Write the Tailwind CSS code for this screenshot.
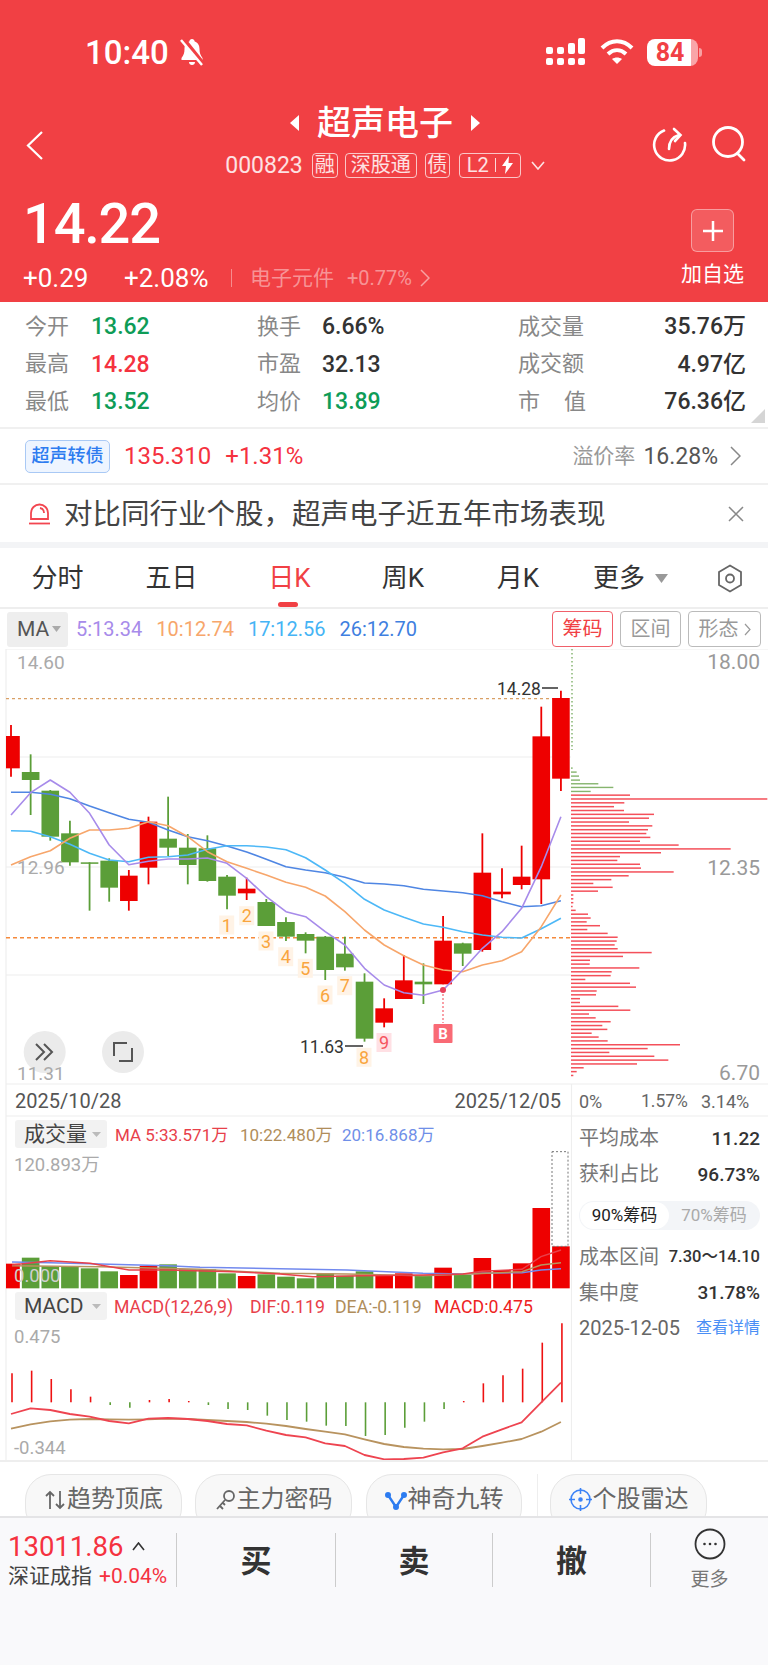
<!DOCTYPE html>
<html lang="zh-CN">
<head>
  <meta charset="UTF-8" />
  <title>超声电子</title>
  <script src="https://cdn.jsdelivr.net/npm/@tailwindcss/browser@4"></script>
</head>
<body class="w-[768px] h-[1665px] overflow-hidden bg-white font-['Roboto','Noto_Sans_CJK_SC',sans-serif]">

  <!-- red header -->
  <header class="h-[302px] bg-[#f14044] text-white">
    <div class="h-[104px] flex items-center">
      <span class="ml-[85px] text-[33px] font-medium leading-none">10:40</span>
      <svg class="ml-[10px]" width="26" height="28" viewBox="0 0 26 28" fill="none">
        <path d="M13 1c-1.500 0-2.500 1-2.700 2.400C6.800 4.500 5.500 7.500 5.500 11c0 4-1 6.500-3 9v2h21v-2c-2-2.500-3-5-3-9 0-3.500-1.300-6.500-4.800-7.600C15.500 2 14.500 1 13 1z" fill="#fff"/>
        <path d="M10 24h6c0 1.800-1.300 3-3 3s-3-1.200-3-3z" fill="#fff"/>
        <path d="M4 1l20 25" stroke="#f14044" stroke-width="5"/>
        <path d="M2 2l21 25" stroke="#fff" stroke-width="2.500"/>
      </svg>
      <svg class="ml-[341px]" width="40" height="28" viewBox="0 0 40 28" fill="#fff">
        <rect x="0" y="20" width="7" height="7" rx="2"/><rect x="0" y="9" width="7" height="7" rx="2"/>
        <rect x="11" y="20" width="7" height="7" rx="2"/><rect x="11" y="9" width="7" height="7" rx="2"/>
        <rect x="22" y="20" width="7" height="7" rx="2"/><rect x="22" y="5" width="7" height="11" rx="2"/>
        <rect x="32" y="20" width="7" height="7" rx="2"/><rect x="32" y="0" width="7" height="16" rx="2"/>
      </svg>
      <svg class="ml-[14px]" width="34" height="26" viewBox="0 0 34 26" fill="none" stroke="#fff" stroke-width="4">
        <path d="M2 9c9-9 21-9 30 0"/>
        <path d="M8 15c5.500-5 12.500-5 18 0"/>
        <path d="M17 25l-5-5c3-2 7-2 10 0z" fill="#fff" stroke="none"/>
      </svg>
      <div class="ml-[13px] w-[51px] h-[27px] rounded-[8px] bg-[linear-gradient(90deg,#fff_86%,#f9a5a8_86%)] flex items-center pl-[9px] text-[#f14044] text-[25px] font-bold leading-none">84</div>
      <div class="ml-[1px] w-[3px] h-[9px] rounded-r-full bg-white/50"></div>
    </div>

    <div class="h-[82px] flex items-center">
      <svg class="ml-[26px]" width="18" height="29" viewBox="0 0 18 29" fill="none" stroke="#fff" stroke-width="2.200"><path d="M16 1L2 14.500 16 28"/></svg>
      <div class="w-[608px] pl-[74px] pb-[8px] flex flex-col items-center">
        <div class="flex items-center h-[38px]">
          <svg width="11" height="18" viewBox="0 0 11 18" fill="#fff"><path d="M10 1v16L1 9z"/></svg>
          <span class="mx-[17px] text-[34px] font-medium leading-none">超声电子</span>
          <svg width="11" height="18" viewBox="0 0 11 18" fill="#fff"><path d="M1 1v16l9-8z"/></svg>
        </div>
        <div class="mt-[10px] flex items-center h-[26px] text-[20px] leading-none text-white/85">
          <span class="text-[23px] mr-[9px]">000823</span>
          <span class="w-[26px] h-[25px] border border-white/70 rounded-[4px] flex items-center justify-center">融</span>
          <span class="ml-[7px] w-[72px] h-[25px] border border-white/70 rounded-[4px] flex items-center justify-center">深股通</span>
          <span class="ml-[8px] w-[25px] h-[25px] border border-white/70 rounded-[4px] flex items-center justify-center">债</span>
          <span class="ml-[9px] w-[62px] h-[25px] border border-white/70 rounded-[4px] flex items-center justify-center gap-[6px]">
            L2<i class="w-[1px] h-[14px] bg-white/80"></i>
            <svg width="11" height="18" viewBox="0 0 11 18" fill="#fff"><path d="M7 0L0 10h4l-1 8 8-11H6.500z"/></svg>
          </span>
          <svg class="ml-[10px]" width="14" height="9" viewBox="0 0 14 9" fill="none" stroke="#fff" stroke-opacity=".85" stroke-width="1.600"><path d="M1 1l6 7 6-7"/></svg>
        </div>
      </div>
      <svg class="-mt-[2px]" width="36" height="38" viewBox="0 0 36 38" fill="none" stroke="#fff" stroke-width="2.600" stroke-linecap="round">
        <path d="M12 5.500A15.500 15.500 0 1 0 33 18"/>
        <path d="M17 24c0-8 3-12 10-14"/>
        <path d="M22 4l6.500 6-5.500 6"/>
      </svg>
      <svg class="ml-[23px] -mt-[2px]" width="36" height="38" viewBox="0 0 36 38" fill="none" stroke="#fff" stroke-width="2.800" stroke-linecap="round">
        <circle cx="17" cy="17" r="14.500"/><path d="M27 29l6 6"/>
      </svg>
    </div>

    <div class="flex justify-between">
      <div>
        <div class="h-[76px] flex items-center pl-[23px] text-[56px] font-medium leading-none tracking-[-1.200px]">14.22</div>
        <div class="h-[32px] flex items-center text-[26px] leading-none">
          <span class="ml-[23px] w-[101px]">+0.29</span>
          <span class="w-[107px]">+2.08%</span>
          <i class="w-[1px] h-[18px] bg-white/40"></i>
          <span class="ml-[18px] text-[21px] text-white/45">电子元件</span>
          <span class="ml-[13px] text-[20px] text-white/45">+0.77%</span>
          <svg class="ml-[8px]" width="10" height="18" viewBox="0 0 10 18" fill="none" stroke="#fff" stroke-opacity=".5" stroke-width="1.500"><path d="M1 1l8 8-8 8"/></svg>
        </div>
      </div>
      <div class="w-[87px] mr-[12px] flex flex-col items-center pt-[23px]">
        <div class="w-[43px] h-[43px] rounded-[6px] bg-white/15 border border-white/40 flex items-center justify-center">
          <svg width="24" height="24" viewBox="0 0 24 24" stroke="#fff" stroke-width="2.500"><path d="M12 2v20M2 12h20"/></svg>
        </div>
        <div class="mt-[10px] h-[24px] text-[21px] leading-[24px] whitespace-nowrap">加自选</div>
      </div>
    </div>
  </header>

  <!-- quote stats -->
  <section class="relative h-[127px] pt-[6px] border-b-2 border-[#f0f0f0] grid grid-cols-[257px_261px_250px] grid-rows-[repeat(3,37.500px)] text-[23px] leading-none font-medium">
    <div class="pl-[25px] flex items-center"><span class="w-[66px] text-[22px] font-normal text-[#888]">今开</span><span class="text-[#0e9c57]">13.62</span></div>
    <div class="flex items-center"><span class="w-[65px] text-[22px] font-normal text-[#888]">换手</span><span class="text-[#333]">6.66%</span></div>
    <div class="flex items-center pr-[22px] justify-between"><span class="text-[22px] font-normal text-[#888]">成交量</span><span class="text-[#333]">35.76万</span></div>
    <div class="pl-[25px] flex items-center"><span class="w-[66px] text-[22px] font-normal text-[#888]">最高</span><span class="text-[#f5323f]">14.28</span></div>
    <div class="flex items-center"><span class="w-[65px] text-[22px] font-normal text-[#888]">市盈</span><span class="text-[#333]">32.13</span></div>
    <div class="flex items-center pr-[22px] justify-between"><span class="text-[22px] font-normal text-[#888]">成交额</span><span class="text-[#333]">4.97亿</span></div>
    <div class="pl-[25px] flex items-center"><span class="w-[66px] text-[22px] font-normal text-[#888]">最低</span><span class="text-[#0e9c57]">13.52</span></div>
    <div class="flex items-center"><span class="w-[65px] text-[22px] font-normal text-[#888]">均价</span><span class="text-[#0e9c57]">13.89</span></div>
    <div class="flex items-center pr-[22px] justify-between"><span class="w-[68px] flex justify-between text-[22px] font-normal text-[#888]"><span>市</span><span>值</span></span><span class="text-[#333]">76.36亿</span></div>
    <svg class="absolute right-[3px] bottom-[4px]" width="14" height="14" viewBox="0 0 14 14" fill="#d5d5d5"><path d="M14 0v14H0z"/></svg>
  </section>

  <!-- convertible bond -->
  <section class="h-[56px] border-b-2 border-[#f0f0f0] flex items-center leading-none">
    <span class="ml-[25px] w-[85px] h-[33px] rounded-[5px] bg-[#eef5ff] border border-[#a9c9f5] text-[#2d7cf0] text-[18px] font-medium flex items-center justify-center">超声转债</span>
    <span class="ml-[14px] text-[24px] text-[#f5323f]">135.310</span>
    <span class="ml-[14px] text-[24px] text-[#f5323f]">+1.31%</span>
    <span class="ml-auto text-[21px] text-[#999]">溢价率</span>
    <span class="ml-[8px] text-[23px] text-[#555]">16.28%</span>
    <svg class="ml-[12px] mr-[27px]" width="11" height="20" viewBox="0 0 11 20" fill="none" stroke="#888" stroke-width="1.500"><path d="M1 1l9 9-9 9"/></svg>
  </section>

  <!-- notice -->
  <section class="h-[57px] pt-[3px] flex items-center leading-none">
    <svg class="ml-[28px] -mt-[3px]" width="23" height="23" viewBox="0 0 23 23" fill="none" stroke="#f24650" stroke-width="1.800">
      <path d="M3 17V11a8.500 8.500 0 0 1 17 0v6z"/><path d="M1 21.500h21"/><path d="M12 6a5 5 0 0 1 4 5"/>
    </svg>
    <span class="ml-[13px] text-[28.500px] text-[#444] whitespace-nowrap">对比同行业个股，超声电子近五年市场表现</span>
    <svg class="ml-auto mr-[24px] -mt-[3px]" width="16" height="16" viewBox="0 0 16 16" fill="none" stroke="#888" stroke-width="1.500"><path d="M1 1l14 14M15 1L1 15"/></svg>
  </section>
  <div class="h-[6px] bg-[#f3f4f6]"></div>

  <!-- period tabs -->
  <nav class="h-[61px] pt-[1px] border-b-2 border-[#eee] flex items-center text-[26px] leading-none text-[#333]">
    <div class="w-[115px] text-center">分时</div>
    <div class="w-[113px] text-center">五日</div>
    <div class="relative w-[123px] h-full flex items-center justify-center text-[#f14044]">日K<i class="absolute bottom-[0px] left-[50px] w-[20px] h-[5px] rounded-full bg-[#f14044]"></i></div>
    <div class="w-[104px] text-center">周K</div>
    <div class="w-[126px] text-center">月K</div>
    <div class="ml-[12px] whitespace-nowrap">更多</div>
    <svg class="ml-[10px]" width="13" height="9" viewBox="0 0 13 9" fill="#999"><path d="M0 0h13L6.500 9z"/></svg>
    <svg class="ml-[49px]" width="26" height="29" viewBox="0 0 26 29" fill="none" stroke="#666" stroke-width="1.800"><path d="M13 1.500l11 6.500v13l-11 6.500L2 21V8z"/><circle cx="13" cy="14.500" r="4"/></svg>
  </nav>

  <!-- moving averages -->
  <div class="h-[40px] flex items-center text-[20px] leading-none">
    <div class="ml-[7px] w-[61px] h-[35px] rounded-[3px] bg-[#eee] flex items-center pl-[10px] text-[#555] text-[21px]">MA<svg class="ml-[3px]" width="9" height="6" viewBox="0 0 9 6" fill="#aaa"><path d="M0 0h9L4.500 6z"/></svg></div>
    <span class="ml-[8px] text-[#a78bea]">5:13.34</span>
    <span class="ml-[14px] text-[#f7a66b]">10:12.74</span>
    <span class="ml-[14px] text-[#45b4f5]">17:12.56</span>
    <span class="ml-[14px] text-[#3f7fe0]">26:12.70</span>
    <span class="ml-auto w-[61px] h-[36px] rounded-[4px] border border-[#f0606a] text-[#f14044] flex items-center justify-center">筹码</span>
    <span class="ml-[7px] w-[61px] h-[36px] rounded-[4px] border border-[#bbb] text-[#999] flex items-center justify-center">区间</span>
    <span class="ml-[7px] mr-[7px] w-[73px] h-[36px] rounded-[4px] border border-[#bbb] text-[#999] flex items-center justify-center gap-[5px]">形态<svg width="7" height="13" viewBox="0 0 7 13" fill="none" stroke="#999" stroke-width="1.200"><path d="M1 1l5 5.500-5 5.500"/></svg></span>
  </div>

  <!-- candlestick chart, drawn in page coordinates -->
  <svg id="kline" class="block" width="768" height="468" viewBox="0 649 768 468" fill="none"></svg>

  <!-- volume + macd with chip summary -->
  <section class="h-[345px] border-b-2 border-[#eee] flex">
    <svg id="lower" class="block shrink-0" width="572" height="343" viewBox="0 1117 572 343" fill="none"></svg>
    <div class="w-[196px] pt-[3px] pl-[7px] pr-[8px] text-[20px] leading-none text-[#777]">
      <div class="h-[36px] flex items-center justify-between">平均成本<span class="text-[19px] font-medium text-[#333]">11.22</span></div>
      <div class="h-[36px] flex items-center justify-between">获利占比<span class="text-[19px] font-medium text-[#333]">96.73%</span></div>
      <div class="mt-[9px] h-[29px] rounded-full bg-[#f3f5f8] flex items-center text-[17px] p-[1px]">
        <span class="w-[89px] h-[27px] rounded-full bg-white text-[#222] flex items-center justify-center">90%筹码</span>
        <span class="flex-1 text-[#aaa] text-center">70%筹码</span>
      </div>
      <div class="mt-[9px] h-[36px] flex items-center justify-between whitespace-nowrap">成本区间<span class="text-[16.500px] font-medium text-[#333]">7.30～14.10</span></div>
      <div class="h-[35px] flex items-center justify-between">集中度<span class="text-[19px] font-medium text-[#333]">31.78%</span></div>
      <div class="h-[36px] flex items-center justify-between whitespace-nowrap text-[#666]">2025-12-05<span class="text-[16px] text-[#4a8ff5]">查看详情</span></div>
    </div>
  </section>

  <!-- indicator chips, cut off by the toolbar -->
  <div class="h-[54px] pt-[12px] overflow-hidden flex text-[24px] leading-none text-[#666]">
    <div class="ml-[25px] w-[157px] h-[60px] rounded-[26px] bg-[#f8f8f8] border border-[#e6e6e6] flex items-start justify-center pt-[12px]">
      <svg class="mt-[2px] mr-[1px]" width="22" height="22" viewBox="0 0 22 22" fill="none" stroke="#666" stroke-width="1.800"><path d="M6 20V3M2 7l4-4 4 4M16 2v17M12 15l4 4 4-4"/></svg>趋势顶底
    </div>
    <div class="ml-[13px] w-[157px] h-[60px] rounded-[26px] bg-[#f8f8f8] border border-[#e6e6e6] flex items-start justify-center pt-[12px]">
      <svg class="mt-[2px]" width="22" height="22" viewBox="0 0 22 22" fill="none" stroke="#666" stroke-width="1.800"><circle cx="14" cy="7" r="5"/><path d="M10 11L2 20M5 17l3 3M8 14l2 2"/></svg>主力密码
    </div>
    <div class="ml-[14px] w-[156px] h-[60px] rounded-[26px] bg-[#f8f8f8] border border-[#e6e6e6] flex items-start justify-center pt-[12px]">
      <svg class="mt-[4px] mr-[1px]" width="22" height="20" viewBox="0 0 22 20" fill="none" stroke="#2d7cf0" stroke-width="2.400"><path d="M3 4l8 12 8-12"/><circle cx="3" cy="4" r="1.800" fill="#2d7cf0"/><circle cx="19" cy="4" r="1.800" fill="#2d7cf0"/><circle cx="11" cy="16" r="1.800" fill="#2d7cf0"/></svg>神奇九转
    </div>
    <i class="ml-[15px] w-[1px] h-[42px] bg-[#eee]"></i>
    <div class="ml-[12px] w-[157px] h-[60px] rounded-[26px] bg-[#f8f8f8] border border-[#e6e6e6] flex items-start justify-center pt-[12px]">
      <svg class="mt-[1px] mr-[1px]" width="23" height="23" viewBox="0 0 23 23" fill="none" stroke="#3b82f6" stroke-width="1.600"><circle cx="11.500" cy="11.500" r="9.500"/><path d="M11.500 0v6M11.500 17v6M0 11.500h6M17 11.500h6"/><circle cx="11.500" cy="11.500" r="1.500" fill="#3b82f6"/></svg>个股雷达
    </div>
  </div>

  <!-- bottom toolbar -->
  <footer class="h-[149px] bg-[#f9f9fb] border-t-2 border-[#e4e4e6] flex items-start pt-[15px] leading-none">
    <div class="w-[176px] pl-[8px] h-[54px] flex flex-col justify-between">
      <div class="flex items-center"><span class="text-[27.500px] text-[#f5323f]">13011.86</span>
        <svg class="ml-[9px]" width="13" height="9" viewBox="0 0 13 9" fill="none" stroke="#333" stroke-width="1.600"><path d="M1 8l5.500-7L12 8"/></svg></div>
      <div class="flex items-center whitespace-nowrap"><span class="text-[21px] text-[#444]">深证成指</span><span class="ml-[7px] text-[21px] text-[#f5323f]">+0.04%</span></div>
    </div>
    <div class="w-[1px] h-[54px] bg-[#ccc]"></div>
    <div class="w-[158px] h-[54px] pt-[3px] flex items-center justify-center text-[31px] font-bold text-[#333]">买</div>
    <div class="w-[1px] h-[54px] bg-[#ccc]"></div>
    <div class="w-[156px] h-[54px] pt-[3px] flex items-center justify-center text-[31px] font-bold text-[#333]">卖</div>
    <div class="w-[1px] h-[54px] bg-[#ccc]"></div>
    <div class="w-[157px] h-[54px] pt-[3px] flex items-center justify-center text-[31px] font-bold text-[#333]">撤</div>
    <div class="w-[1px] h-[54px] bg-[#ccc]"></div>
    <div class="w-[117px] flex flex-col items-center -mt-[5px]">
      <svg width="32" height="32" viewBox="0 0 32 32" fill="none"><circle cx="16" cy="16" r="14.500" stroke="#333" stroke-width="1.800"/><circle cx="10.500" cy="16" r="1.300" fill="#333"/><circle cx="16" cy="16" r="1.300" fill="#333"/><circle cx="21.500" cy="16" r="1.300" fill="#333"/></svg>
      <span class="mt-[10px] text-[19px] text-[#777]">更多</span>
    </div>
  </footer>

  <script>
    const RED = '#ee0000', GREEN = '#5b9e38';
    const cx = i => 11 + 19.64 * i;
    const ky = v => 640 + v / 3;   // price chart y from measured values
    const ly = v => 1110 + v / 3;  // lower panels y from measured values

    function line(x1, y1, x2, y2, stroke, w, extra = '') {
      return `<line x1="${x1}" y1="${y1}" x2="${x2}" y2="${y2}" stroke="${stroke}" stroke-width="${w}" ${extra}/>`;
    }
    function rect(x, y, w, h, fill, extra = '') {
      return `<rect x="${x}" y="${y}" width="${w}" height="${h}" fill="${fill}" ${extra}/>`;
    }
    function text(x, y, str, fill, size, extra = '') {
      return `<text x="${x}" y="${y}" fill="${fill}" font-size="${size}" dominant-baseline="central" ${extra}>${str}</text>`;
    }
    function poly(vals, toY, stroke, w = 1.6) {
      const pts = vals.map((v, i) => cx(i).toFixed(1) + ',' + toY(v).toFixed(1)).join(' ');
      return `<polyline points="${pts}" stroke="${stroke}" stroke-width="${w}" stroke-linejoin="round"/>`;
    }

    // wick top, body top, body bottom, wick bottom, colour
    const candles = [
      [255,288,385,410,'r'],[343,396,420,525,'g'],[450,452,590,602,'g'],[542,580,667,677,'g'],
      [667,667,670,812,'g'],[655,662,743,785,'g'],[690,707,783,812,'r'],[530,545,683,733,'r'],
      [470,596,623,648,'g'],[582,623,675,733,'g'],[586,625,723,725,'g'],[705,710,767,808,'g'],
      [713,746,760,780,'r'],[777,786,858,858,'g'],[832,846,890,903,'g'],[877,882,902,940,'g'],
      [888,890,990,1020,'g'],[890,941,982,992,'g'],[1000,1025,1196,1205,'g'],[1075,1105,1148,1162,'r'],
      [945,1021,1077,1077,'r'],[970,1025,1033,1092,'g'],[828,902,1033,1033,'r'],[908,910,941,978,'g'],
      [580,698,930,935,'r'],[685,755,763,775,'r'],[617,710,735,748,'r'],[200,289,718,792,'r'],[152,174,416,453,'r']
    ];
    const ma5 = [525,458,420,457,520,615,674,664,657,657,654,670,715,770,815,830,875,915,985,1035,1058,1066,1050,990,925,875,805,680,530];
    const ma10 = [675,650,632,595,570,570,565,545,557,590,635,665,685,705,727,742,768,815,870,915,947,975,990,995,975,962,935,860,765];
    const ma17 = [572,574,590,613,640,660,665,652,650,645,628,617,617,621,629,653,690,730,778,810,832,852,862,875,885,892,894,866,835];
    const ma26 = [457,457,463,476,498,518,538,547,570,590,602,618,636,658,680,690,698,712,729,732,737,748,753,758,767,785,800,797,782];

    // chip distribution: row y and bar end, as measured
    const chipGreen = [[384,38],[396,50],[408,57],[420,60],[431,115],[442,160],[454,92]];
    const chipWidths = [210,622,193,162,192,282,267,207,277,264,259,271,240,356,512,303,180,172,240,243,341,206,154,100,158,114,40,40,40,38,47,84,92,80,120,82,143,173,170,164,173,275,189,90,89,238,155,152,76,210,228,110,108,60,60,175,211,87,107,152,127,142,95,116,143,360,263,148,283,325,231,71,50,40];

    let k = '';
    [649, 1084, 1116].forEach(y => { k += line(6, y, 768, y, '#eeeeee', 1.2); });
    [757, 867, 975].forEach(y => { k += line(6, y, 571, y, '#eeeeee', 1.2); });
    k += line(6, 649, 6, 1117, '#eeeeee', 1.2);
    k += line(571.500, 1084, 571.500, 1117, '#eeeeee', 1.2);

    k += line(6, 698.700, 570, 698.700, '#d9a066', 1.2, 'stroke-dasharray="3 3"');
    k += line(6, 937.700, 570, 937.700, '#f58a3c', 1.6, 'stroke-dasharray="4 3"');
    k += line(572, 649, 572, 750, '#7fb069', 1.4, 'stroke-dasharray="1.500 2.500"');

    candles.forEach((c, i) => {
      const col = c[4] === 'r' ? RED : GREEN;
      const x = cx(i);
      k += line(x, ky(c[0]), x, ky(c[3]), col, 1.8);
      const left = Math.max(6, x - 8.8);
      k += rect(left, ky(c[1]), x + 8.8 - left, Math.max(ky(c[2]) - ky(c[1]), 1.5), col);
    });

    k += poly(ma26, ky, '#4f86e3');
    k += poly(ma17, ky, '#4db8f7');
    k += poly(ma10, ky, '#f7a66b');
    k += poly(ma5, ky, '#a78bea');

    chipGreen.forEach(r => { k += rect(571, ky(r[0]) - 0.6, r[1] / 3 - 11, 1.4, '#86b56e'); });
    chipWidths.forEach((w, i) => {
      const row = 465 + i * 11.52;
      k += rect(571, ky(row) - 0.6, w / 3 - 11, 1.5, '#f4505a');
    });

    // nine-turn markers
    [[226.700,925,'1'],[246.700,915.700,'2'],[266,941,'3'],[285.700,956.700,'4'],[305.300,968.300,'5'],[325,995,'6'],[344.700,985.700,'7'],[364,1057.300,'8']].forEach(m => {
      k += rect(m[0] - 7.500, m[1] - 9.500, 15, 19, '#fff3e6');
      k += text(m[0], m[1], m[2], '#f9a53d', 18, 'text-anchor="middle"');
    });
    k += rect(376.500, 1033, 15, 19, '#ffe0e4');
    k += text(384, 1042.500, '9', '#f5555f', 18, 'text-anchor="middle"');

    k += line(443, 990, 443, 1023, '#f5606b', 1.2, 'stroke-dasharray="2 2"');
    k += '<circle cx="443" cy="990" r="3" fill="#e8405a"/>';
    k += rect(433.500, 1024, 19, 19, '#f96a75', 'rx="1"');
    k += text(443, 1034, 'B', '#fff', 15, 'text-anchor="middle" font-weight="700"');

    k += text(497, 689, '14.28', '#333', 17.5);
    k += line(542, 688, 558, 688, '#222', 1.4);
    k += text(300, 1047, '11.63', '#333', 17.5);
    k += line(345, 1046, 363, 1046, '#222', 1.4);

    k += text(17, 662, '14.60', '#aaaaaa', 19);
    k += text(17, 867, '12.96', '#aaaaaa', 19);
    k += text(760, 662, '18.00', '#999', 21, 'text-anchor="end"');
    k += text(760, 868, '12.35', '#999', 21, 'text-anchor="end"');
    k += text(760, 1073, '6.70', '#999', 21, 'text-anchor="end"');

    k += '<circle cx="44.700" cy="1052" r="21" fill="#ebebeb"/><circle cx="123" cy="1052" r="21" fill="#ebebeb"/>';
    k += text(17, 1073, '11.31', '#aaaaaa', 19);
    k += '<path d="M36 1044l8 8-8 8M44 1044l8 8-8 8" stroke="#555" stroke-width="2"/>';
    k += '<path d="M114 1056v-13h13M132 1048v13h-13" stroke="#555" stroke-width="2"/>';

    k += text(15, 1101, '2025/10/28', '#555', 20);
    k += text(561, 1101, '2025/12/05', '#555', 20, 'text-anchor="end"');
    k += text(579, 1101, '0%', '#666', 18);
    k += text(641, 1101, '1.57%', '#666', 17.5);
    k += text(701, 1101, '3.14%', '#666', 18);
    document.getElementById('kline').innerHTML = k;

    // lower panels
    const volTop = [461,443,468,468,475,484,495,468,463,478,478,490,498,493,500,505,490,497,484,498,490,497,473,495,444,480,460,294,409];
    const volRed = [0,6,7,12,19,20,22,24,25,26,27,28];
    const hist = [790,782,807,838,860,885,893,870,867,873,885,897,900,917,930,935,947,948,978,975,953,935,897,873,820,796,776,698,640];
    const dif = [912,895,900,912,920,933,940,926,924,927,933,942,946,962,975,982,1000,1008,1035,1048,1047,1043,1027,1015,980,958,937,877,818];
    const dea = [956,943,934,929,927,928,929,928,926,927,930,933,936,941,948,957,965,973,988,1002,1011,1016,1018,1017,1008,998,987,965,936];

    let l = '';
    l += line(6, 1117, 6, 1460, '#eeeeee', 1.2);
    l += line(571.500, 1117, 571.500, 1460, '#eeeeee', 1.2);

    volTop.forEach((v, i) => {
      const col = volRed.includes(i) ? RED : GREEN;
      const left = Math.max(6, cx(i) - 8.8);
      l += rect(left, ly(v), cx(i) + 8.8 - left, ly(535) - ly(v), col);
    });
    l += rect(552, ly(125), 16, ly(409) - ly(125), 'none', 'stroke="#777" stroke-width="1" stroke-dasharray="2 2"');

    const free = (pts, stroke) => `<polyline points="${pts.map(p => p[0] + ',' + ly(p[1]).toFixed(1)).join(' ')}" stroke="${stroke}" stroke-width="1.4"/>`;
    l += free([[12,456],[50,458],[100,462],[167,467],[200,472],[280,476],[347,480],[423,490],[463,492],[482,490],[522,488],[541,480],[561,476]], '#7289ee');
    l += free([[12,467],[100,470],[200,478],[280,490],[347,492],[423,497],[463,493],[522,485],[541,465],[561,458]], '#b8935f');
    l += free([[12,465],[50,452],[90,460],[129,480],[167,480],[233,485],[280,492],[313,500],[363,497],[423,495],[463,492],[482,484],[522,478],[541,440],[561,420]], '#e8404a');
    l += text(14, 1276, '0.000', '#cfcfcf', 18.500);

    l += rect(15, 1120, 92, 28, '#f2f2f2', 'rx="3"');
    l += text(24, 1134, '成交量', '#444', 21);
    l += '<path d="M92 1132h9l-4.500 5z" fill="#bbb"/>';
    l += text(115, 1135, 'MA 5:33.571万', '#e8404a', 17);
    l += text(240, 1135, '10:22.480万', '#b08d5a', 17);
    l += text(342, 1135, '20:16.868万', '#6f8fe8', 17);
    l += text(14, 1165, '120.893万', '#aaaaaa', 18.500);

    l += rect(15, 1292, 92, 28, '#f2f2f2', 'rx="3"');
    l += text(24, 1306, 'MACD', '#444', 21);
    l += '<path d="M92 1304h9l-4.500 5z" fill="#bbb"/>';
    l += text(114, 1307, 'MACD(12,26,9)', '#e8404a', 17.700);
    l += text(250, 1307, 'DIF:0.119', '#e8404a', 17.700);
    l += text(335, 1307, 'DEA:-0.119', '#b08d5a', 17.700);
    l += text(434, 1307, 'MACD:0.475', '#ee2222', 17.700);
    l += text(14, 1337, '0.475', '#aaaaaa', 18.500);
    l += text(14, 1448, '-0.344', '#aaaaaa', 18.500);

    hist.forEach((v, i) => {
      const x = cx(i) + 1;
      l += line(x, ly(877), x, ly(v), v < 877 ? '#ee1111' : GREEN, 1.6);
    });
    l += poly(dea, ly, '#b8935f', 1.8);
    l += poly(dif, ly, '#ee4450', 1.8);
    document.getElementById('lower').innerHTML = l;
  </script>
</body>
</html>
